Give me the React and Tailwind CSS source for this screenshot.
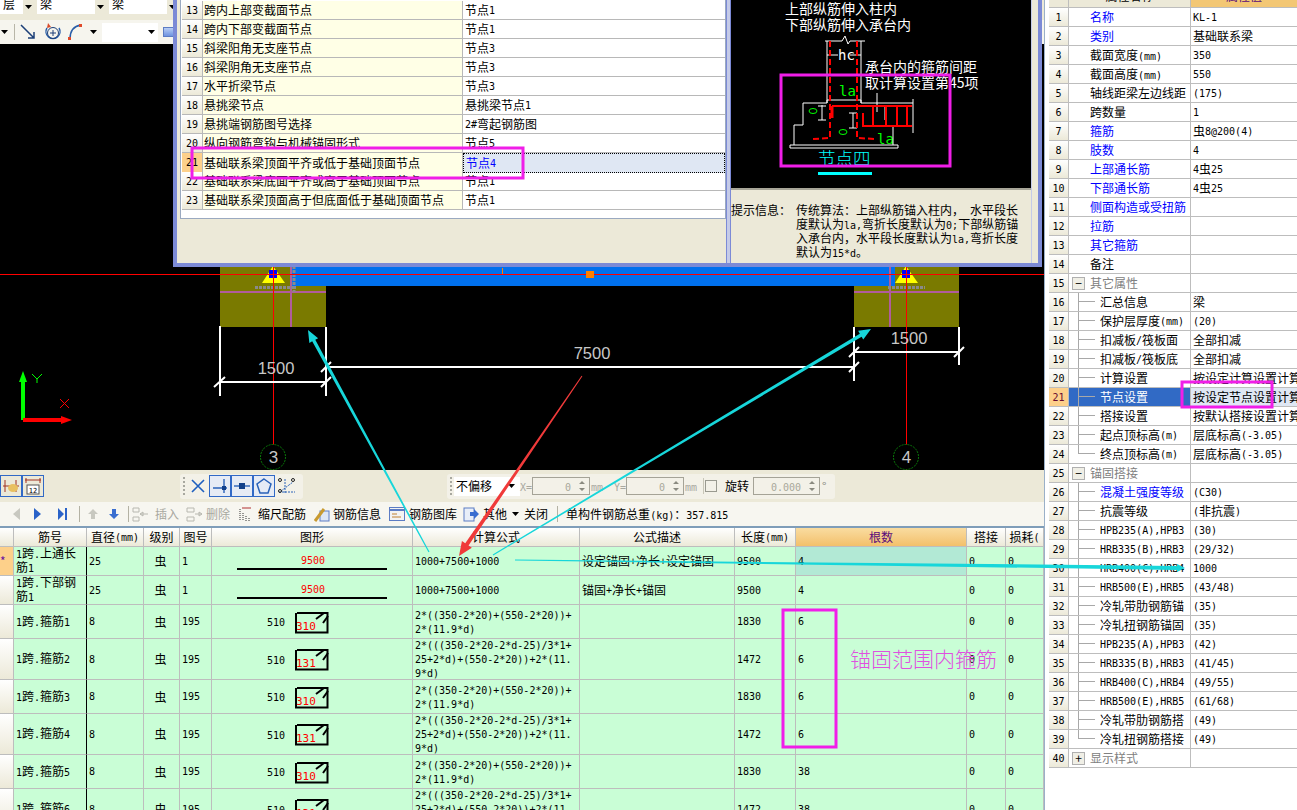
import React from 'react';

// latin runs are 6px wide per char, like the bitmap font of the original app
const T = ({ children }) => {
  const parts = String(children).split(/([ -~]+)/);
  return (
    <>
      {parts.map((p, i) =>
        i % 2 ? (
          <span key={i} className="font-['DejaVu_Sans_Mono',monospace] text-[10px]">{p}</span>
        ) : (
          p
        )
      )}
    </>
  );
};

const Lines = ({ text }) => (
  <div className="whitespace-nowrap leading-[12px]">
    {text.split('\n').map((l, i) => (
      <div key={i}><T>{l}</T></div>
    ))}
  </div>
);

// tapered arrow with the tip at x2,y2
const arrowPoints = (x1, y1, x2, y2, w1, w2, hl, hw) => {
  const len = Math.hypot(x2 - x1, y2 - y1);
  const ux = (x2 - x1) / len;
  const uy = (y2 - y1) / len;
  const nx = -uy;
  const ny = ux;
  const bx = x2 - ux * hl;
  const by = y2 - uy * hl;
  const pts = [
    [x1 + (nx * w1) / 2, y1 + (ny * w1) / 2],
    [bx + (nx * w2) / 2, by + (ny * w2) / 2],
    [bx + (nx * hw) / 2, by + (ny * hw) / 2],
    [x2, y2],
    [bx - (nx * hw) / 2, by - (ny * hw) / 2],
    [bx - (nx * w2) / 2, by - (ny * w2) / 2],
    [x1 - (nx * w1) / 2, y1 - (ny * w1) / 2],
  ];
  return pts.map((p) => p.join(',')).join(' ');
};

const Combo = ({ w, text }) => (
  <div className={`flex h-[14px] bg-white overflow-hidden ${w}`}>
    <div className="flex-1 pl-[3px] leading-[12px] -mt-[2px]">{text}</div>
    <div className="w-[11px] bg-[#ece9d8] flex items-center justify-center text-black">
      <svg width="7" height="4"><path d="M0 0h7L3.5 4z" fill="#000" /></svg>
    </div>
  </div>
);

const TopBars = () => (
  <div className="h-[44px] bg-[#ece9d8] flex flex-col">
    <div className="flex gap-[3px] h-[14px]">
      <Combo w="w-[34px]" text="层" />
      <Combo w="w-[69px]" text="梁" />
      <Combo w="w-[69px]" text="梁" />
    </div>
    <div className="mt-[6px] h-[24px] bg-[#f6f5ee] flex items-center">
      <svg width="8" height="4" className="ml-[1px]"><path d="M0 0h7L3.5 4z" fill="#000" /></svg>
      <div className="ml-[5px] w-px h-[16px] bg-[#b8b6a8]" />
      <svg width="16" height="16" className="ml-[5px]" viewBox="0 0 16 16">
        <path d="M1 1L14 14M14 8v6H8" stroke="#1c3f78" strokeWidth="1.5" fill="none" />
      </svg>
      <svg width="18" height="20" className="ml-[8px]" viewBox="0 0 18 20">
        <path d="M3 6a7 7 0 1 0 12 0" stroke="#2a5ea8" strokeWidth="1.5" fill="none" />
        <circle cx="9" cy="11" r="5.5" stroke="#1c3f78" fill="none" />
        <path d="M9 8v6M6 11h6" stroke="#1c3f78" />
        <path d="M4 1l3 4-4 1z" fill="#d94a2a" />
      </svg>
      <svg width="16" height="18" className="ml-[5px]" viewBox="0 0 16 18">
        <path d="M3 16C3 8 7 3 14 2" stroke="#2a5ea8" strokeWidth="1.5" fill="none" />
        <rect x="1" y="14" width="3" height="3" fill="#e04a2a" />
        <rect x="12" y="1" width="3" height="3" fill="#e04a2a" />
      </svg>
      <svg width="7" height="4" className="ml-[7px]"><path d="M0 0h7L3.5 4z" fill="#000" /></svg>
      <div className="ml-[5px] w-[56px] h-[19px] bg-white flex justify-end items-center pr-[3px]">
        <svg width="7" height="4"><path d="M0 0h7L3.5 4z" fill="#000" /></svg>
      </div>
      <div className="ml-[5px] w-[12px] h-[10px] bg-gradient-to-b from-[#b8cdf5] to-[#6f93e0] border border-[#5c7cc4]" />
    </div>
  </div>
);

const Canvas = () => (
  <div className="h-[426px] bg-black overflow-hidden">
    <svg width="1044" height="426" viewBox="0 44 1044 426" className="block">
      <rect x="220" y="262" width="106" height="65" fill="#7a7a00" />
      <rect x="854" y="262" width="105" height="65" fill="#7a7a00" />
      <rect x="290" y="262" width="605" height="24" fill="#0070ee" />
      <path d="M220 292H326M291 262V327M854 292H959M890 262V327" stroke="#b05c9c" strokeWidth="2" />
      <path d="M255 287.5H296M294 266V292M888 287.5H925" stroke="#8a8a8a" strokeWidth="3" strokeDasharray="3 1" />
      <path d="M273 266L262 283H285ZM906 266L895 283H918Z" fill="#ffff00" />
      <rect x="269" y="270" width="8" height="8" fill="#0000ff" />
      <rect x="902" y="270" width="8" height="8" fill="#0000ff" />
      <path d="M0 274.5H1044" stroke="#ff0000" />
      <path d="M273.5 262V470M906.5 262V470" stroke="#ff0000" />
      <rect x="502" y="268" width="1" height="6" fill="#ff8000" />
      <rect x="586" y="271" width="8" height="7" fill="#ff8000" />
      {/* dimensions */}
      <path
        d="M220 326V396M326 327V396M220 382H326M214 387L225 377M321 387L331 377M326 367H854M321 372L331 362M849 372L859 362M854 327V381M854 352H959M849 357L859 347M954 357L964 347M959 327V365"
        stroke="#fff"
        strokeWidth="2"
        fill="none"
      />
      <text x="276" y="374" textAnchor="middle" fontSize="16.5" fill="#c8c8c8" fontFamily="Liberation Sans">1500</text>
      <text x="592" y="359" textAnchor="middle" fontSize="16.5" fill="#c8c8c8" fontFamily="Liberation Sans">7500</text>
      <text x="909" y="344" textAnchor="middle" fontSize="16.5" fill="#c8c8c8" fontFamily="Liberation Sans">1500</text>
      {/* axis bubbles */}
      <circle cx="273" cy="457" r="12.5" stroke="#0a7a0a" fill="#000" strokeDasharray="2 1" />
      <circle cx="906" cy="457" r="12.5" stroke="#0a7a0a" fill="#000" strokeDasharray="2 1" />
      <text x="273.5" y="463" textAnchor="middle" fontSize="17" fill="#c8c8c8" fontFamily="Liberation Sans">3</text>
      <text x="906.5" y="463" textAnchor="middle" fontSize="17" fill="#c8c8c8" fontFamily="Liberation Sans">4</text>
      {/* ucs */}
      <rect x="21" y="380" width="4" height="40" fill="#00ff00" />
      <path d="M23 371L27 382H19Z" fill="#00ff00" />
      <rect x="23" y="418" width="40" height="4" fill="#ff0000" />
      <path d="M72 420L61 416V424Z" fill="#ff0000" />
      <path d="M32 374L37 379L42 374M37 379V383" stroke="#00ff00" fill="none" />
      <path d="M60 399L69 408M69 399L60 408" stroke="#ff0000" />
    </svg>
  </div>
);

const SnapBtn = ({ children }) => (
  <div className="w-[22px] h-[22px] flex items-center justify-center border border-[#3169c6] bg-[#e6ebf5]">
    {children}
  </div>
);

const Spin = ({ w, text }) => (
  <div className={`h-[18px] border border-[#a5a397] flex items-center justify-end text-[#a8a89a] ${w}`}>
    <span><T>{text}</T></span>
    <svg width="12" height="16" className="ml-[5px] mr-[1px]" viewBox="0 0 12 16">
      <path d="M6 3l3 3H3zM6 13L3 10h6z" fill="#8a8a80" />
    </svg>
  </div>
);

const SnapBar = () => (
  <div className="h-[32px] bg-[#ece9d8] flex items-center">
    <div className="h-[22px] w-[22px] ml-0 flex items-center justify-center border border-[#3169c6]">
      <svg width="18" height="18" viewBox="0 0 18 18">
        <path d="M3 3v12M14 3v12M1 9h16" stroke="#a03020" />
        <ellipse cx="11" cy="11" rx="5" ry="4" fill="#e8c060" />
      </svg>
    </div>
    <div className="h-[22px] w-[22px] flex items-center justify-center border border-[#3169c6]">
      <svg width="18" height="18" viewBox="0 0 18 18">
        <path d="M1 3h16M2 1v5M16 1v5" stroke="#a03020" />
        <rect x="3" y="8" width="12" height="9" fill="#fff" stroke="#555" />
        <text x="9" y="15.5" textAnchor="middle" fontSize="7" fontFamily="DejaVu Sans Mono" fill="#000">12</text>
      </svg>
    </div>
    <div className="ml-[136px] h-[25px] w-[123px] bg-[#f3f1e8] rounded-[3px] flex items-center pl-[3px]">
      <div className="w-[2px] h-[18px] border-l-2 border-dotted border-[#a8a8a0]" />
      <svg width="16" height="16" viewBox="0 0 16 16" className="ml-[5px]">
        <path d="M2 2L14 14M14 2L2 14" stroke="#1f5fbf" strokeWidth="1.6" />
      </svg>
      <div className="ml-[3px] flex">
        <SnapBtn>
          <svg width="18" height="18" viewBox="0 0 18 18">
            <path d="M2 11H16M13 2V16" stroke="#2a62b8" strokeWidth="1.4" />
            <rect x="11" y="9" width="4" height="4" fill="#12408a" />
          </svg>
        </SnapBtn>
        <SnapBtn>
          <svg width="18" height="18" viewBox="0 0 18 18">
            <path d="M1 9H17" stroke="#2a62b8" strokeWidth="1.4" />
            <rect x="6" y="6" width="6" height="6" fill="#12408a" />
          </svg>
        </SnapBtn>
        <SnapBtn>
          <svg width="18" height="18" viewBox="0 0 18 18">
            <path d="M9 2L16 7L13 16H5L2 7Z" stroke="#2a62b8" strokeWidth="1.5" fill="none" />
          </svg>
        </SnapBtn>
      </div>
      <svg width="20" height="18" viewBox="0 0 20 18" className="ml-[2px]">
        <path d="M2 15H18M8 2V16M4 14L16 5" stroke="#2a62b8" strokeDasharray="2 1" />
        <circle cx="3" cy="3" r="1.5" fill="none" stroke="#222" />
        <circle cx="16" cy="3" r="1.5" fill="none" stroke="#222" />
        <circle cx="3" cy="14" r="1.5" fill="none" stroke="#222" />
      </svg>
    </div>
    <div className="ml-[144px] h-[25px] w-[388px] bg-[#f3f1e8] rounded-[3px] flex items-center pl-[3px]">
      <div className="w-[2px] h-[18px] border-l-2 border-dotted border-[#a8a8a0]" />
      <div className="ml-[2px] w-[66px] h-[19px] flex items-center bg-white pl-[2px]">
        <span className="flex-1">不偏移</span>
      </div>
      <svg width="7" height="4" className="-ml-[12px]"><path d="M0 0h7L3.5 4z" fill="#000" /></svg>
      <span className="ml-[5px] text-[#a8a8a0] w-[12px]"><T>X=</T></span>
      <Spin w="w-[58px]" text="0" />
      <span className="text-[#a8a8a0] ml-[1px] w-[18px]"><T>mm</T></span>
      <span className="ml-[5px] text-[#a8a8a0] w-[12px]"><T>Y=</T></span>
      <Spin w="w-[58px]" text="0" />
      <span className="text-[#a8a8a0] ml-[1px] w-[18px]"><T>mm</T></span>
      <div className="w-px h-[16px] bg-[#c8c6b8]" />
      <div className="ml-[1px] w-[12px] h-[12px] border border-[#9a9a90]" />
      <span className="ml-[8px]">旋转</span>
      <div className="ml-[4px]"><Spin w="w-[67px]" text="0.000" /></div>
      <span className="ml-[2px] text-[#8a8a80]"><T>°</T></span>
    </div>
  </div>
);

const Sep = ({ ml }) => <div className={`w-px h-[16px] bg-[#b4b2a4] ${ml}`} />;

const ActionBar = () => (
  <div className="h-[24px] bg-[#f7f6f0] flex items-center">
    <svg width="9" height="14" viewBox="0 0 9 14" className="ml-[12px]"><path d="M8 1V13L1 7Z" fill="#c8c8c0" /></svg>
    <svg width="9" height="14" viewBox="0 0 9 14" className="ml-[12px]"><path d="M1 1V13L8 7Z" fill="#2a62c8" /></svg>
    <svg width="11" height="14" viewBox="0 0 11 14" className="ml-[15px]"><path d="M1 1V13L7 7ZM8 1h2v12H8z" fill="#2a62c8" /></svg>
    <Sep ml="ml-[11px]" />
    <svg width="12" height="12" viewBox="0 0 12 12" className="ml-[7px]"><path d="M6 1L11 6H8V11H4V6H1Z" fill="#c8c8c0" /></svg>
    <svg width="12" height="12" viewBox="0 0 12 12" className="ml-[9px]"><path d="M6 11L1 6H4V1H8V6H11Z" fill="#3a6ed0" /></svg>
    <Sep ml="ml-[8px]" />
    <svg width="17" height="15" viewBox="0 0 17 15" className="ml-[3px]">
      <path d="M1 1h6v4H1zM1 10h6v4H1zM8 7H16M8 7l3-2v4z" stroke="#b8b8b0" fill="none" />
    </svg>
    <span className="ml-[6px] text-[#a8a8a0]">插入</span>
    <svg width="17" height="15" viewBox="0 0 17 15" className="ml-[7px]">
      <path d="M1 1h7v4H1zM1 10h7v4H1zM9 7H16M16 7l-3-2v4z" stroke="#b8b8b0" fill="none" />
    </svg>
    <span className="ml-[3px] text-[#a8a8a0]">删除</span>
    <svg width="13" height="15" viewBox="0 0 13 15" className="ml-[9px]">
      <path d="M1 2V14M4 6V14M7 9V14M10 11V14" stroke="#333" strokeDasharray="1 1" />
      <path d="M3 1H12" stroke="#b03030" />
    </svg>
    <span className="ml-[6px]">缩尺配筋</span>
    <svg width="16" height="16" viewBox="0 0 16 16" className="ml-[8px]">
      <rect x="6" y="5" width="9" height="10" fill="#dde6f5" stroke="#5c7cc4" />
      <path d="M1 15L10 3" stroke="#c89a30" strokeWidth="3" />
    </svg>
    <span className="ml-[3px]">钢筋信息</span>
    <svg width="16" height="14" viewBox="0 0 16 14" className="ml-[8px]">
      <rect x="0.5" y="0.5" width="15" height="13" fill="#f3f3f3" stroke="#5c7cc4" />
      <path d="M1 3H15" stroke="#5c7cc4" strokeWidth="2" />
      <path d="M3 7H8M3 10H12" stroke="#c08030" />
    </svg>
    <span className="ml-[4px]">钢筋图库</span>
    <svg width="17" height="15" viewBox="0 0 17 15" className="ml-[6px]">
      <rect x="1" y="1" width="10" height="13" fill="#e8eef8" stroke="#5c7cc4" />
      <path d="M7 5h4V2l5 5-5 5V9H7z" fill="#3a6ed0" />
    </svg>
    <span className="ml-[3px]">其他</span>
    <svg width="7" height="4" className="ml-[5px]"><path d="M0 0h7L3.5 4z" fill="#000" /></svg>
    <span className="ml-[5px]">关闭</span>
    <Sep ml="ml-[9px]" />
    <span className="ml-[8px] whitespace-nowrap"><T>单构件钢筋总重(kg)：357.815</T></span>
  </div>
);

const COLS = 'grid grid-cols-[14px_73px_57px_36px_32px_201px_167px_155px_61px_171px_39px_38px]';
const cell = 'flex items-center overflow-hidden border-r border-b border-[#bdbdbd] pl-[2px] whitespace-nowrap';
const headCell = 'flex items-center justify-center overflow-hidden border-r border-[#bdbdbd] whitespace-nowrap bg-gradient-to-b from-white to-[#ece9d8]';

const A = '2*((350-2*20)+(550-2*20))+\n2*(11.9*d)';
const B = '2*(((350-2*20-2*d-25)/3*1+\n25+2*d)+(550-2*20))+2*(11.\n9*d)';

const bars = [
  { h: 'h-[29px]', name: '1跨.上通长\n筋1', d: 25, fig: 1, len: 9500, formula: '1000+7500+1000', desc: '设定锚固+净长+设定锚固', count: 4, cur: true },
  { h: 'h-[29px]', name: '1跨.下部钢\n筋1', d: 25, fig: 1, len: 9500, formula: '1000+7500+1000', desc: '锚固+净长+锚固', count: 4 },
  { h: 'h-[34px]', name: '1跨.箍筋1', d: 8, fig: 195, len: 1830, red: 310, formula: A, count: 6 },
  { h: 'h-[41px]', name: '1跨.箍筋2', d: 8, fig: 195, len: 1472, red: 131, formula: B, count: 6 },
  { h: 'h-[34px]', name: '1跨.箍筋3', d: 8, fig: 195, len: 1830, red: 310, formula: A, count: 6 },
  { h: 'h-[41px]', name: '1跨.箍筋4', d: 8, fig: 195, len: 1472, red: 131, formula: B, count: 6 },
  { h: 'h-[34px]', name: '1跨.箍筋5', d: 8, fig: 195, len: 1830, red: 310, formula: A, count: 38 },
  { h: 'h-[41px]', name: '1跨.箍筋6', d: 8, fig: 195, len: 1472, red: 131, formula: B, count: 38 },
];

const BarShape = ({ row }) =>
  row.red ? (
    <div className="flex items-center">
      <span className="ml-[55px] text-[11px]"><T>510</T></span>
      <div className="ml-[10px] mt-[2px] w-[34px] h-[22px]">
        <svg width="34" height="22" viewBox="0 0 34 22" className="block">
          <path d="M2 1H32.5V20.5H1V1" stroke="#000" strokeWidth="2" fill="none" />
          <path d="M21 7L29 1M28 11L33 4" stroke="#000" strokeWidth="2" />
          <text x="1" y="18" fontSize="11" fontFamily="DejaVu Sans Mono" fill="#ff0000">{row.red}</text>
        </svg>
      </div>
    </div>
  ) : (
    <div className="w-full flex flex-col items-center">
      <span className="text-[#ff0000] leading-[12px] mt-[1px] ml-[2px]"><T>{row.len}</T></span>
      <div className="w-[150px] h-[2px] bg-black mt-[1px]" />
    </div>
  );

const BarTable = () => (
  <div className="border-t-2 border-[#7f9db9] flex-1 overflow-hidden bg-[#c9fed6]">
    <div className={`${COLS} h-[19px] border-b border-[#bdbdbd]`}>
      {['', '筋号', '直径(mm)', '级别', '图号', '图形', '计算公式', '公式描述', '长度(mm)', '根数', '搭接', '损耗('].map((t, i) => (
        <div
          key={i}
          className={
            i === 9
              ? 'flex items-center justify-center overflow-hidden border-r border-[#bdbdbd] bg-gradient-to-b from-[#f9dca0] to-[#f3c06a] text-[#5a0a7a]'
              : headCell
          }
        >
          <T>{t}</T>
        </div>
      ))}
    </div>
    {bars.map((r, i) => (
      <div key={i} className={`${COLS} ${r.h}`}>
        <div
          className={`border-r border-b border-[#bdbdbd] flex items-center ${
            r.cur ? 'bg-[#fdd08a] text-[#6a10a0]' : 'bg-gradient-to-b from-white to-[#ece9d8]'
          }`}
        >
          {r.cur ? '*' : ''}
        </div>
        <div className={`${cell} !border-r-black`}><Lines text={r.name} /></div>
        <div className={cell}><T>{r.d}</T></div>
        <div className={`${cell} justify-center pr-[4px]`}>虫</div>
        <div className={cell}><T>{r.fig}</T></div>
        <div className="overflow-hidden border-r border-b border-[#bdbdbd] flex items-center"><BarShape row={r} /></div>
        <div className={cell}><Lines text={r.formula} /></div>
        <div className={cell}><T>{r.desc || ''}</T></div>
        <div className={cell}><T>{r.len}</T></div>
        <div className={`${cell} ${r.cur ? 'bg-[#b2e9d5]' : ''}`}><T>{r.count}</T></div>
        <div className={cell}><T>0</T></div>
        <div className={cell}><T>0</T></div>
      </div>
    ))}
  </div>
);

const nodeRows = [
  [13, '跨内上部变截面节点', '节点1'],
  [14, '跨内下部变截面节点', '节点1'],
  [15, '斜梁阳角无支座节点', '节点3'],
  [16, '斜梁阴角无支座节点', '节点3'],
  [17, '水平折梁节点', '节点3'],
  [18, '悬挑梁节点', '悬挑梁节点1'],
  [19, '悬挑端钢筋图号选择', '2#弯起钢筋图'],
  [20, '纵向钢筋弯钩与机械锚固形式', '节点5'],
  [21, '基础联系梁顶面平齐或低于基础顶面节点', '节点4'],
  [22, '基础联系梁底面平齐或高于基础顶面节点', '节点1'],
  [23, '基础联系梁顶面高于但底面低于基础顶面节点', '节点1'],
];

const NodePreview = () => (
  <svg width="300" height="188" viewBox="731 0 300 188" className="block bg-black">
    <g fill="#fff" fontSize="14" fontFamily="Noto Sans CJK SC">
      <text x="785" y="14">上部纵筋伸入柱内</text>
      <text x="785" y="30">下部纵筋伸入承台内</text>
      <text x="865" y="72">承台内的箍筋间距</text>
      <text x="865" y="88">取计算设置第45项</text>
    </g>
    <text x="818" y="165" fill="#00ffff" fontSize="17.5" fontWeight="300" fontFamily="Noto Sans CJK SC">节点四</text>
    <rect x="818" y="172" width="54" height="3" fill="#00ffff" />
    <text x="838" y="60" fill="#fff" fontSize="14" fontFamily="DejaVu Sans Mono">hc</text>
    <g fill="#00ff00" fontSize="14" fontFamily="DejaVu Sans Mono">
      <text x="839" y="96">la</text>
      <text x="877" y="144">la</text>
    </g>
    <g stroke="#fff" fill="none" strokeWidth="1">
      <path d="M825 41H842L845 36L848 44L850 41H865" />
      <path d="M827 41V103M861 41V103" />
      <path d="M827 55H838M850 55H861" />
      <path d="M803 103H827L827 100H861L861 103H913M913 99V133" />
      <path d="M803 103V125H794V145M790 145H898V148H790ZM863 126H893V145" />
      <path d="M822 105V120M853 113V128M877 93V112M885 105V120" />
      <path d="M818 106H826M818 120H826M849 113H857M849 128H857" />
    </g>
    <g stroke="#ff0000" fill="none" strokeWidth="2">
      <path d="M830 41V138L813 139" strokeDasharray="6 3" />
      <path d="M857 41V138L875 139" strokeDasharray="6 3" />
      <path d="M832 106H912M863 113V126H912M873 106V126M886 106V126M897 106V126M907 106V126" />
      <path d="M832 106V118" strokeWidth="3" />
    </g>
    <ellipse cx="813" cy="111" rx="4" ry="2.5" stroke="#00ff00" fill="none" />
    <ellipse cx="843" cy="132" rx="4" ry="2.5" stroke="#00ff00" fill="none" />
  </svg>
);

const NodeDialog = () => (
  <div className="absolute left-[173px] top-0 w-[869px] h-[267px] bg-[#ece9d8] border-x-4 border-b-4 border-[#7c8ad6] flex">
    <div className="w-[549px] pl-[3px]">
      <div className="h-[219px] bg-white border-x border-b border-[#9aa9c0] pt-px overflow-hidden">
        {nodeRows.map((r) => (
          <div key={r[0]} className="grid grid-cols-[21px_260px_1fr] ml-px h-[19px]">
            <div
              className={`flex items-center justify-center border-r border-b border-[#b8b8b8] ${
                r[0] === 21 ? 'bg-[#fdd08a]' : 'bg-gradient-to-b from-white to-[#ece9d8]'
              }`}
            >
              <T>{r[0]}</T>
            </div>
            <div className="flex items-center bg-[#ffffe6] border-r border-b border-[#b8b8b8] pl-px whitespace-nowrap">
              <T>{r[1]}</T>
            </div>
            <div
              className={`flex items-center pl-[2px] ${
                r[0] === 21
                  ? 'bg-[#dfe7f3] border border-dotted border-black text-[#0000ff]'
                  : 'border-b border-[#b8b8b8]'
              }`}
            >
              <T>{r[2]}</T>
            </div>
          </div>
        ))}
      </div>
    </div>
    <div className="w-[5px] border-x border-[#7c8ad6] bg-[#c5cbe8]" />
    <div className="flex-1 flex">
      <div className="w-[300px]">
        <NodePreview />
        <div className="h-[2px] bg-[#a8a698]" />
        <div className="flex mt-[14px] leading-[12px] whitespace-nowrap">
          <span className="w-[65px]">提示信息：</span>
          <div>
            <div><T>传统算法：上部纵筋锚入柱内， 水平段长</T></div>
            <div><T>度默认为la,弯折长度默认为0;下部纵筋锚</T></div>
            <div><T>入承台内，水平段长度默认为la,弯折长度</T></div>
            <div><T>默认为15*d。</T></div>
          </div>
        </div>
      </div>
      <div className="flex-1 border-l border-[#c5cbe8]" />
    </div>
  </div>
);

const props = [
  { n: '名称', v: 'KL-1', blue: 1 },
  { n: '类别', v: '基础联系梁', blue: 1 },
  { n: '截面宽度(mm)', v: '350' },
  { n: '截面高度(mm)', v: '550' },
  { n: '轴线距梁左边线距', v: '(175)' },
  { n: '跨数量', v: '1' },
  { n: '箍筋', v: '虫8@200(4)', blue: 1 },
  { n: '肢数', v: '4', blue: 1 },
  { n: '上部通长筋', v: '4虫25', blue: 1 },
  { n: '下部通长筋', v: '4虫25', blue: 1 },
  { n: '侧面构造或受扭筋', v: '', blue: 1 },
  { n: '拉筋', v: '', blue: 1 },
  { n: '其它箍筋', v: '', blue: 1 },
  { n: '备注', v: '' },
  { n: '其它属性', v: '', group: '−' },
  { n: '汇总信息', v: '梁', sub: 1 },
  { n: '保护层厚度(mm)', v: '(20)', sub: 1 },
  { n: '扣减板/筏板面', v: '全部扣减', sub: 1 },
  { n: '扣减板/筏板底', v: '全部扣减', sub: 1 },
  { n: '计算设置', v: '按设定计算设置计算', sub: 1 },
  { n: '节点设置', v: '按设定节点设置计算', sub: 1, sel: 1 },
  { n: '搭接设置', v: '按默认搭接设置计算', sub: 1 },
  { n: '起点顶标高(m)', v: '层底标高(-3.05)', sub: 1 },
  { n: '终点顶标高(m)', v: '层底标高(-3.05)', sub: 1, last: 1 },
  { n: '锚固搭接', v: '', group: '−' },
  { n: '混凝土强度等级', v: '(C30)', sub: 1, blue: 1 },
  { n: '抗震等级', v: '(非抗震)', sub: 1 },
  { n: 'HPB235(A),HPB3', v: '(30)', sub: 1 },
  { n: 'HRB335(B),HRB3', v: '(29/32)', sub: 1 },
  { n: 'HRB400(C),HRB4', v: '1000', sub: 1 },
  { n: 'HRB500(E),HRB5', v: '(43/48)', sub: 1 },
  { n: '冷轧带肋钢筋锚', v: '(35)', sub: 1 },
  { n: '冷轧扭钢筋锚固', v: '(35)', sub: 1 },
  { n: 'HPB235(A),HPB3', v: '(42)', sub: 1 },
  { n: 'HRB335(B),HRB3', v: '(41/45)', sub: 1 },
  { n: 'HRB400(C),HRB4', v: '(49/55)', sub: 1 },
  { n: 'HRB500(E),HRB5', v: '(61/68)', sub: 1 },
  { n: '冷轧带肋钢筋搭', v: '(49)', sub: 1 },
  { n: '冷轧扭钢筋搭接', v: '(49)', sub: 1, last: 1 },
  { n: '显示样式', v: '', group: '+' },
];

const PropName = ({ p }) => {
  if (p.group) {
    return (
      <div className="flex items-center text-[#808080]">
        <div className="ml-[3px] w-[13px] h-[13px] border border-[#b0b0b0] bg-[#f0efe6] flex items-center justify-center text-black leading-none">
          {p.group}
        </div>
        <span className="ml-[5px]">{p.n}</span>
      </div>
    );
  }
  if (p.sub) {
    return (
      <div className={`flex h-full items-stretch ${p.sel ? 'text-white' : p.blue ? 'text-[#0000ff]' : ''}`}>
        <div className={`ml-[9px] w-[17px] ${p.last ? '' : 'border-l border-[#a8a8a8]'}`}>
          <div className={`h-1/2 border-b border-[#a8a8a8] ${p.last ? 'border-l' : ''}`} />
        </div>
        <span className="ml-[5px] flex items-center"><T>{p.n}</T></span>
      </div>
    );
  }
  return <span className={`ml-[21px] ${p.blue ? 'text-[#0000ff]' : ''}`}><T>{p.n}</T></span>;
};

const PropPanel = () => (
  <div className="flex-1 bg-white overflow-hidden">
    <div className="h-[8px] grid grid-cols-[20px_122px_1fr] border-b border-[#bdbdbd] ml-[4px] overflow-hidden">
      <div className="bg-[#ece9d8] border-r border-[#bdbdbd]" />
      <div className="bg-[#ece9d8] border-r border-[#bdbdbd] flex items-end justify-center leading-[12px] h-[7px] overflow-hidden">
        <span className="mb-[5px] shrink-0">属性名称</span>
      </div>
      <div className="bg-[#f3c774] text-[#5a0a7a] flex items-end justify-center leading-[12px] h-[7px] overflow-hidden">
        <span className="mb-[5px] shrink-0">属性值</span>
      </div>
    </div>
    {props.map((p, i) => (
      <div key={i} className="grid grid-cols-[20px_122px_1fr] ml-[4px] h-[19px]">
        <div
          className={`flex items-center justify-center border-r border-b border-[#bdbdbd] ${
            p.sel ? 'bg-[#fdd08a] text-[#6a0a30]' : 'bg-gradient-to-b from-white to-[#ece9d8]'
          }`}
        >
          <T>{i + 1}</T>
        </div>
        <div
          className={`flex items-center whitespace-nowrap overflow-hidden border-r border-b border-[#bdbdbd] ${
            p.sel ? 'bg-[#316ac5]' : ''
          }`}
        >
          <PropName p={p} />
        </div>
        <div
          className={`flex items-center pl-[2px] whitespace-nowrap overflow-hidden border-b border-[#bdbdbd] ${
            p.sel ? 'bg-[#dfe7f3]' : ''
          }`}
        >
          <T>{p.v}</T>
        </div>
      </div>
    ))}
  </div>
);

const Annotations = () => (
  <svg width="1297" height="810" className="absolute left-0 top-0 pointer-events-none">
    <g fill="none" stroke="#f01ee8" strokeWidth="3">
      <rect x="192" y="148" width="331" height="30" />
      <rect x="781" y="75" width="169" height="91" />
      <rect x="1182" y="382" width="90" height="25" />
      <rect x="783" y="610" width="53" height="137" />
    </g>
    <polygon points={arrowPoints(429, 552, 308, 330, 1.2, 3.5, 12, 10)} fill="#17d6da" />
    <polygon points={arrowPoints(493, 555, 871, 329, 1.2, 3.5, 12, 10)} fill="#17d6da" />
    <polygon points={arrowPoints(515, 560, 1185, 568, 1, 4, 8, 8)} fill="#17d6da" />
    <polygon points={arrowPoints(582, 376, 459, 556, 1, 4, 14, 12)} fill="#f03a3a" />
    <text x="850" y="667" fontSize="21" fill="#e050e0" fontFamily="Noto Sans CJK SC" fontWeight="300">锚固范围内箍筋</text>
  </svg>
);

export default function App() {
  return (
    <div className="relative w-[1297px] h-[810px] overflow-hidden flex bg-white text-black text-[12px] font-['Noto_Sans_CJK_SC',sans-serif]">
      <div className="w-[1044px] flex flex-col bg-[#ece9d8]">
        <TopBars />
        <Canvas />
        <SnapBar />
        <ActionBar />
        <BarTable />
      </div>
      <div className="w-px bg-[#9ab0c8]" />
      <PropPanel />
      <NodeDialog />
      <Annotations />
    </div>
  );
}
